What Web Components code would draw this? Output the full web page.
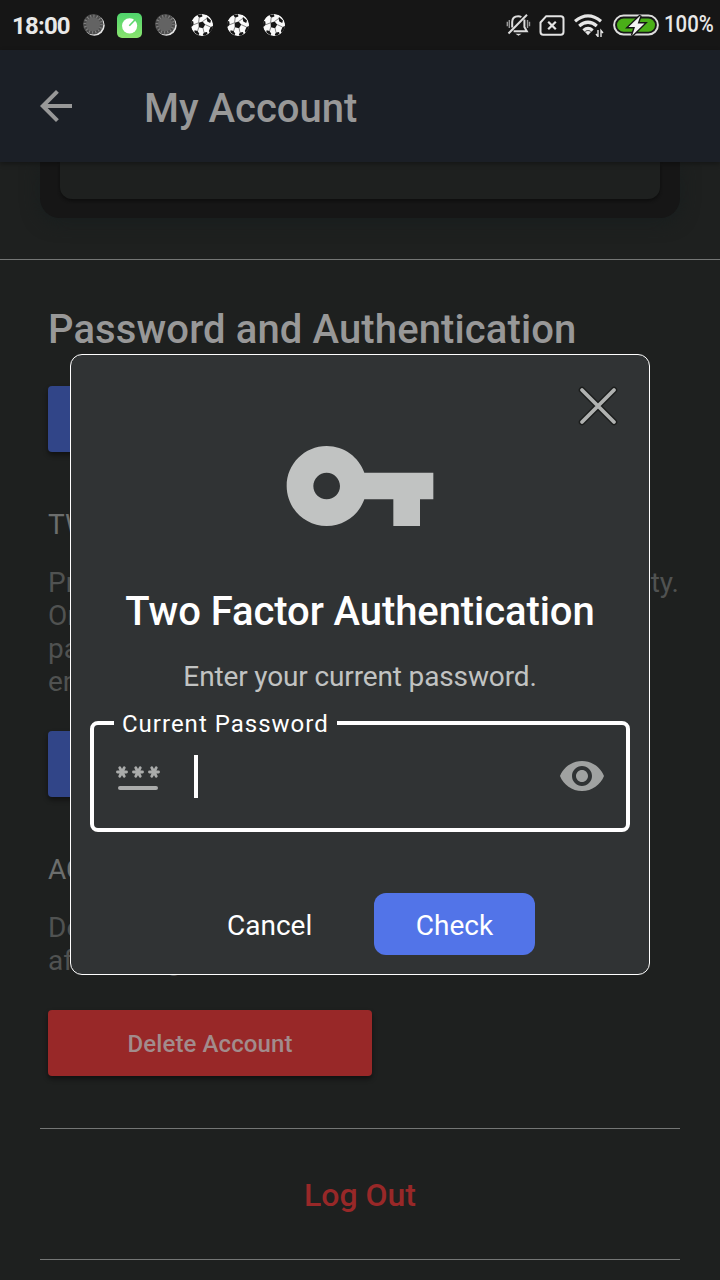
<!DOCTYPE html>
<html lang="en"><head><meta charset="utf-8"><title>My Account</title>
<style>html,body{margin:0;background:#1e201f}body{font-family:Roboto,sans-serif;width:720px;height:1280px;overflow:hidden}</style></head>
<body><account-screen></account-screen>
<script>
const define=(name,html)=>{const t=document.createElement('template');t.innerHTML=html;
customElements.define(name,class extends HTMLElement{constructor(){super();this.attachShadow({mode:'open'}).append(t.content.cloneNode(true))}})};

define('soccer-icon',`<style>:host{display:block;width:22px;height:22px}svg{display:block}</style>
<svg width="22" height="22" viewBox="0 0 22 22"><defs><clipPath id="b"><circle cx="11" cy="11" r="11"/></clipPath></defs><g clip-path="url(#b)"><circle cx="11" cy="11" r="11" fill="#fafafa"/>
<g fill="#161616"><path d="M7.600 8.800l4-1.300 2.600 3.100-2.100 3.600-4.300-1z"/><path d="M6.300 1.300L11 .3l.4 2.100-3.200 1.300zM16 3l4 3.600-.8 2.400-2.900-1.400-.8-3zM0 6.500l2.300 1 .4 3.200L.5 13-1 12zM19.500 13l2.500-1v4l-3 3.500-1.200-2.500zM3.600 16.200l3 .8 1.700 2.700-1 1.500-4-3zM13 18.600l3-.6.5 2-3.500 2-1.200-1.400z"/></g>
<path d="M7.600 8.800L8.200 3.700M11.600 7.500l3.900-2.900M14.200 10.600l5.300 2.400M12.100 14.200l.9 4.400M7.800 13.200l-1.200 3.800M7.600 8.800L2.700 10.700" stroke="#555" stroke-width=".7"/></g></svg>`);

define('moon-icon',`<style>:host{display:block;width:22px;height:22px}svg{display:block}</style>
<svg width="22" height="22" viewBox="0 0 22 22"><circle cx="11.400" cy="11.400" r="10.300" fill="#e5e5e5"/><circle cx="10.200" cy="10.200" r="10.200" fill="#4c4c4c"/><circle cx="10.200" cy="10.200" r="8" fill="none" stroke="#858585" stroke-width="3" stroke-dasharray="1 2.140"/><circle cx="10.200" cy="10.200" r="7" fill="#636363"/></svg>`);

define('status-bar',`<style>:host{display:flex;align-items:center;height:50px;background:#161616;color:#e8e8e8;box-sizing:border-box;padding:0 8px 0 12px;justify-content:space-between}
.g{display:flex;align-items:center}svg{display:block}.time{font-weight:700;font-size:24px;line-height:28px;width:58px;margin-right:13px;position:relative;top:1px;letter-spacing:-.8px;white-space:nowrap}
moon-icon{margin-right:12px}.timer{margin-right:13px}soccer-icon+soccer-icon{margin-left:14px}moon-icon.last{margin-right:14px}
.pct{font-weight:500;font-size:23px;line-height:28px;position:relative;width:48px;margin-left:5px;white-space:nowrap}.pct b{display:block;font-weight:500;transform:scaleX(.885);transform-origin:0 50%}</style>
<div class="g"><span class="time">18:00</span><moon-icon></moon-icon>
<svg class="timer" width="25" height="25" viewBox="0 0 25 25"><defs><linearGradient id="g" x2="0" y2="1"><stop stop-color="#4fd46c"/><stop offset="1" stop-color="#8be46f"/></linearGradient></defs><rect width="25" height="25" rx="5" fill="url(#g)"/><circle cx="12.600" cy="12.800" r="7.600" fill="#fff"/><path d="M12.300 12.800L18.300 6.500" stroke="#5cd86d" stroke-width="1.600"/></svg>
<moon-icon class="last"></moon-icon><soccer-icon></soccer-icon><soccer-icon></soccer-icon><soccer-icon></soccer-icon></div>
<div class="g">
<svg width="25" height="24" viewBox="0 0 25 24" style="margin-right:8px" fill="none" stroke="#ddd" stroke-width="2"><path d="M2.500 20.500L21 1.800"/><path d="M6.200 14.500V9c0-3.700 2.300-5.800 6-5.800 1.200 0 2.300.3 3.200.8M18.400 6.500V14l2.400 4.200H7.600"/><path d="M9.400 20.700h6.200l-3.100 2z" fill="#ddd" stroke="none"/><path d="M3.300 7v8M1.300 8.800v4.400M21.500 7v8M23.500 8.800v4.400" stroke-width="1.400" stroke="#999"/></svg>
<svg width="26" height="21" viewBox="0 0 26 21" style="margin-right:9px" fill="none" stroke="#e4e4e4" stroke-width="2"><path d="M7.200 1.200h14.600q2.700 0 2.700 2.700v13.200q0 2.700-2.700 2.700H4.200q-2.700 0-2.700-2.700V7.500z"/><path d="M9.200 6.700l7.600 7.600m0-7.600l-7.600 7.600" stroke-width="2.200"/></svg>
<svg width="30" height="24" viewBox="0 0 30 24" style="margin-right:9px" fill="none" stroke="#e6e6e6" stroke-width="3.200"><path d="M1 8.300Q14 -2.700 27 8.300M5.200 13Q14 5.500 22.800 13M9.400 17.400Q14 13.600 18.700 17.400"/><path d="M10.800 18.800Q14 17 17.200 18.800L14 22.300z" fill="#e6e6e6" stroke="none"/><path d="M24 17v6.500l-2-2.500M27 24v-6.500l2 2.500" stroke-width="1.400"/></svg>
<svg width="46" height="24" viewBox="0 0 46 24"><rect x="1.100" y="2.600" width="43.800" height="19" rx="9.500" fill="#161616" stroke="#ddd" stroke-width="2"/><rect x="4" y="5.500" width="38" height="13.200" rx="6.600" fill="#4aaf18"/><path d="M27.500 2.500L15.500 14h6.500l-2.800 8.500L31.500 10.400h-6.800z" fill="#f2f2f2" stroke="#161616" stroke-width="2.800" paint-order="stroke"/></svg>
<span class="pct"><b>100%</b></span></div>`);

define('app-bar',`<style>:host{display:flex;height:112px;box-sizing:border-box;background:#1b1f26;padding:35px 0 0 32px;box-shadow:0 2px 5px #0005;position:relative}
svg{margin-top:-3px}.t{color:#989898;font-size:40px;line-height:47px;font-weight:500;margin-left:64px;white-space:nowrap}</style>
<svg width="48" height="48" viewBox="0 0 24 24" fill="#989898"><path d="M20 11H7.830l5.590-5.590L12 4l-8 8 8 8 1.410-1.410L7.830 13H20v-2z"/></svg><div class="t"><slot></slot></div>`);

define('solid-button',`<style>:host{display:flex;align-items:center;justify-content:center;width:324px;height:66px;border-radius:4px;background:var(--fill,#314588);color:#a28c8c;font-size:24px;font-weight:500;box-shadow:0 3px 5px #0007;line-height:28px;letter-spacing:.1px}span{position:relative;top:1px}</style><span><slot></slot></span>`);

define('settings-page',`<style>:host{display:flow-root;height:1118px;background:#1e201f;color:#505251;font-size:28px;line-height:33px}
.card{height:56px;margin:0 40px;box-sizing:border-box;padding:0 20px;background:#161616;border-radius:0 0 20px 20px;box-shadow:0 4px 18px #181e1e}.in{height:37px;background:#1e201f;border-radius:0 0 12px 12px;box-shadow:0 2px 3px #0e0e0e}
.line{height:1px;background:#747675;margin-top:41px}.inset{margin:52px 40px 0}h2{margin:46px 0 0 48px;font-size:40px;line-height:47px;font-weight:500;color:#989898;white-space:nowrap;letter-spacing:.12px}
solid-button{margin:33px 0 0 48px}.cap{margin:56px 0 25px 48px;color:#6c6e6d}.copy{margin:0 41px 0 48px}.row{display:flex;justify-content:space-between}
.out{text-align:center;color:#982828;font-size:32px;line-height:38px;font-weight:500;padding:47px 0 45px}.last{margin:0 40px}.red{--fill:#982828}</style>
<div class="card"><div class="in"></div></div><div class="line"></div>
<h2>Password and Authentication</h2><solid-button></solid-button>
<div class="cap">TW</div><div class="copy"><div class="row"><span>Pr</span><span>ty.</span></div><div>On</div><div>pa</div><div>en</div></div>
<solid-button></solid-button><div class="cap">AC</div><div class="copy"><div>De</div><div>after being</div></div>
<solid-button class="red">Delete Account</solid-button><div class="line inset"></div><div class="out">Log Out</div><div class="line last"></div>`);

define('password-field',`<style>:host{display:flex;align-items:center;box-sizing:border-box;width:540px;height:111px;border:4px solid #fff;border-radius:8px;position:relative;padding:0 20px}
.label{position:absolute;left:20px;top:-15px;width:223px;box-sizing:border-box;padding-left:8px;background:#303334;color:#fff;font-size:24px;line-height:28px;letter-spacing:1px;white-space:nowrap}
.caret{width:4px;height:43px;background:#fff;margin-left:32px}.eye{margin-left:auto}svg{display:block;margin-bottom:2px}</style>
<span class="label"><slot></slot></span>
<svg width="48" height="48" viewBox="0 0 48 48" stroke="#aaacab" stroke-linecap="round"><path d="M6 36H42" stroke-width="4"/><g stroke-width="2.900"><path d="M3.500 20h9M5.800 15.800l4.400 8.400M10.200 15.800l-4.400 8.400"/><path d="M19.500 20h9M21.800 15.800l4.400 8.400M26.200 15.800l-4.400 8.400"/><path d="M35.500 20h9M37.800 15.800l4.400 8.400M42.200 15.800l-4.400 8.400"/></g></svg>
<i class="caret"></i>
<svg class="eye" width="48" height="48" viewBox="0 0 24 24" fill="#a0a2a1"><path d="M12 4.500C7 4.500 2.730 7.610 1 12c1.730 4.390 6 7.500 11 7.500s9.270-3.110 11-7.500c-1.730-4.390-6-7.500-11-7.500zM12 17c-2.760 0-5-2.240-5-5s2.240-5 5-5 5 2.240 5 5-2.240 5-5 5zm0-8c-1.660 0-3 1.340-3 3s1.340 3 3 3 3-1.340 3-3-1.340-3-3-3z"/></svg>`);

define('auth-dialog',`<style>:host{display:flex;flex-direction:column;align-items:center;box-sizing:border-box;width:580px;height:621px;border:1px solid #fff;border-radius:12px;background:#303334;position:absolute;left:70px;top:354px;color:#fff}
.x{position:absolute;right:28px;top:28px}.key{margin-top:51px;flex:none}h1{font-size:40px;font-weight:500;line-height:47px;margin:22px 0 0;white-space:nowrap;letter-spacing:-.08px}
p{margin:25px 0 28px;font-size:28px;line-height:33px;color:#c1c3c2;white-space:nowrap;letter-spacing:-.14px}.acts{display:flex;align-items:center;margin:61px 0 0;width:100%;font-size:28px;line-height:33px}
.cancel{margin-left:156px;width:85px}.ok{margin-left:62px;width:161px;height:62px;border-radius:12px;background:#5274e8;display:flex;align-items:center;justify-content:center}.acts span{position:relative;top:1px}</style>
<svg class="x" width="46" height="46" viewBox="0 0 46 46" stroke-linecap="round"><path d="M7 7L39 39M39 7L7 39" stroke="#1b1d1c" stroke-width="6.500"/><path d="M7 7L39 39M39 7L7 39" stroke="#b0b2b1" stroke-width="3.800"/></svg>
<svg class="key" width="160" height="160" viewBox="0 0 24 24" fill="#c1c3c2"><path d="M12.650 10C11.830 7.670 9.610 6 7 6c-3.310 0-6 2.690-6 6s2.690 6 6 6c2.610 0 4.830-1.670 5.650-4H17v4h4v-4h2v-4H12.650zM7 14c-1.100 0-2-.9-2-2s.9-2 2-2 2 .9 2 2-.9 2-2 2z"/></svg>
<h1>Two Factor Authentication</h1><p>Enter your current password.</p><password-field>Current Password</password-field>
<div class="acts"><span class="cancel">Cancel</span><div class="ok"><span>Check</span></div></div>`);

define('account-screen',`<style>:host{display:block;width:720px;height:1280px;position:relative;overflow:hidden}</style>
<status-bar></status-bar><app-bar>My Account</app-bar><settings-page></settings-page><auth-dialog></auth-dialog>`);
</script></body></html>
